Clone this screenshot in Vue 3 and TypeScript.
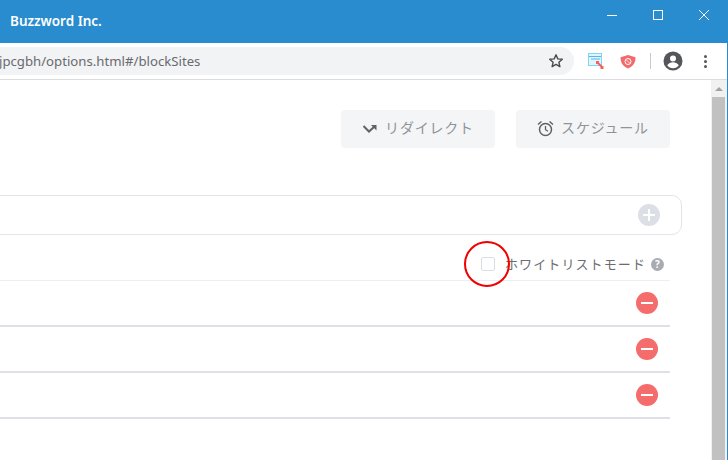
<script setup lang="ts">
const rows = [1, 2, 3]
</script>

<template>
  <div class="window">
    <header class="titlebar">
      <span class="title">Buzzword Inc.</span>
      <div class="window-controls">
        <svg width="12" height="12" viewBox="0 0 12 12"><path d="M1 6.500h10" stroke="#fff" fill="none" /></svg>
        <svg width="12" height="12" viewBox="0 0 12 12"><rect x="1.500" y="1.500" width="9" height="9" stroke="#fff" fill="none" /></svg>
        <svg width="12" height="12" viewBox="0 0 12 12"><path d="M1 1l10 10M11 1L1 11" stroke="#fff" fill="none" /></svg>
      </div>
    </header>

    <div class="toolbar">
      <div class="urlbar">
        <span class="url">jpcgbh/options.html#/blockSites</span>
        <svg class="star" width="16" height="16" viewBox="0 0 16 16">
          <path d="M8 1.800l1.800 4.100 4.500.4-3.400 3 1 4.400L8 11.400l-3.900 2.300 1-4.400-3.400-3 4.500-.4z" fill="none" stroke="#4a4a4c" stroke-width="1.400" stroke-linejoin="round" />
        </svg>
      </div>
      <div class="extensions">
        <svg class="ext-window" width="17" height="18" viewBox="0 0 17 18">
          <rect x="1.500" y="1.500" width="13" height="12" fill="#e3f4fd" stroke="#81d4fa" />
          <path d="M2 4.500h12M4 7h9" stroke="#4fb8ee" />
          <path d="M10 10l5 5" stroke="#f4645a" stroke-width="2" />
          <rect x="9" y="9" width="3" height="3" fill="#f4645a" />
          <rect x="13.500" y="14" width="3" height="3" fill="#f4645a" />
        </svg>
        <svg class="ext-shield" width="16" height="16" viewBox="0 0 16 16">
          <path d="M8 2l7.500 2.200c0 5.300-2 8.900-7.500 11.300C2.500 13.100.5 9.500.5 4.200z" fill="#f26a6a" />
          <circle cx="8" cy="8.500" r="3" fill="none" stroke="#fff" stroke-width="1" />
          <path d="M6.300 6.800l3.400 3.400" stroke="#fff" stroke-width="0.800" />
        </svg>
        <span class="divider"></span>
        <svg class="avatar" width="20" height="20" viewBox="0 0 20 20">
          <circle cx="10" cy="10" r="9.500" fill="#55565a" />
          <circle cx="10" cy="7.500" r="3" fill="#fff" />
          <path d="M4.200 14.200c1.200-2 3.600-3 5.800-3s4.600 1 5.800 3c-1.300 1.800-3.400 3-5.800 3s-4.500-1.200-5.800-3z" fill="#fff" />
        </svg>
        <span class="menu-dots"><i></i><i></i><i></i></span>
      </div>
    </div>

    <div class="viewport">
      <main class="page">
        <div class="tabs">
          <button class="tab">
            <svg width="16" height="16" viewBox="0 0 16 16">
              <path d="M1.500 6l5.500 5.500 6-5.500" fill="none" stroke="#606266" stroke-width="2" />
              <path d="M14.500 5v5.500L9 5z" fill="#606266" />
            </svg>
            <span>リダイレクト</span>
          </button>
          <button class="tab">
            <svg width="17" height="17" viewBox="0 0 17 17">
              <circle cx="8.500" cy="9.500" r="6" fill="none" stroke="#606266" stroke-width="1.500" />
              <path d="M8.500 6v3.700l2.500 1.500" fill="none" stroke="#606266" stroke-width="1.300" />
              <path d="M1 4.500L4.500 1.500M16 4.500l-3.500-3" fill="none" stroke="#606266" stroke-width="1.500" />
            </svg>
            <span>スケジュール</span>
          </button>
        </div>

        <div class="add-input">
          <span class="round-icon plus"></span>
        </div>

        <div class="whitelist-row">
          <span class="checkbox"></span>
          <span class="whitelist-label">ホワイトリストモード</span>
          <span class="help">?</span>
        </div>

        <div v-for="row in rows" :key="row" class="site-row">
          <span class="round-icon minus"></span>
        </div>

        <span class="marker"></span>
      </main>

      <aside class="scrollbar">
        <span class="arrow"></span>
        <span class="thumb"></span>
      </aside>
    </div>
  </div>
</template>

<style scoped>
.window {
  width: 728px;
  height: 460px;
  display: flex;
  flex-direction: column;
  overflow: hidden;
  background: #fff;
  box-sizing: border-box;
  border-right: 1px solid #288cce;
  font-family: "Noto Sans", "Noto Sans CJK JP", sans-serif;
}

.titlebar {
  height: 43px;
  flex: none;
  background: #288cce;
  display: flex;
  justify-content: space-between;
  padding-left: 10px;
}

.title {
  color: #fff;
  font-size: 13.5px;
  font-weight: 600;
  line-height: 42px;
}

.window-controls {
  display: flex;
  gap: 34px;
  padding: 9px 17px 0 0;
  align-items: flex-start;
}

.toolbar {
  height: 37px;
  flex: none;
  box-sizing: border-box;
  display: flex;
  border-bottom: 1px solid #dadce0;
  padding-top: 4px;
}

.urlbar {
  width: 574px;
  height: 28px;
  flex: none;
  background: #f1f3f4;
  border-radius: 0 14px 14px 0;
  display: flex;
  align-items: center;
  justify-content: space-between;
  padding-right: 10px;
  box-sizing: border-box;
}

.url {
  color: #6a6a70;
  font-size: 13.2px;
  margin-left: -1px;
}

.star {
  flex: none;
}

.extensions {
  display: flex;
  align-items: center;
  height: 28px;
  padding-left: 13px;
}

.ext-shield {
  margin-left: 16px;
}

.divider {
  width: 1px;
  height: 16px;
  background: #c8cacc;
  margin: 0 12px 0 14px;
}

.menu-dots {
  display: flex;
  flex-direction: column;
  gap: 2px;
  margin-left: 21px;
}

.menu-dots i {
  width: 3px;
  height: 3px;
  background: #55565a;
  border-radius: 50%;
}

.viewport {
  flex: 1;
  display: flex;
  min-height: 0;
}

.page {
  position: relative;
  flex: 1;
  min-width: 0;
  overflow: hidden;
  padding: 30px 41px 0 0;
  display: flex;
  flex-direction: column;
  align-items: stretch;
}

.tabs {
  display: flex;
  justify-content: flex-end;
  gap: 21px;
}

.tab {
  width: 154px;
  height: 38px;
  border: 0;
  border-radius: 4px;
  background: #f4f5f7;
  color: #909399;
  font-family: inherit;
  font-size: 14px;
  letter-spacing: 0.8px;
  display: flex;
  align-items: center;
  justify-content: center;
  gap: 7px;
  padding: 0 0 2px;
}

.tab span {
  margin-top: -2px;
}

.add-input {
  height: 40px;
  box-sizing: border-box;
  margin: 47px -12px 0 -20px;
  border: 1px solid #e2e4e8;
  border-radius: 10px;
  display: flex;
  align-items: center;
  justify-content: flex-end;
  padding-right: 21px;
  flex: none;
}

.round-icon {
  position: relative;
  display: block;
  width: 22px;
  height: 22px;
  border-radius: 50%;
}

.round-icon::before,
.plus::after {
  content: "";
  position: absolute;
  left: 5px;
  top: 10px;
  width: 12px;
  height: 2px;
  background: #fff;
}

.plus {
  background: #dcdfe6;
}

.plus::after {
  transform: rotate(90deg);
}

.minus {
  background: #f56c6c;
}

.whitelist-row {
  height: 46px;
  box-sizing: border-box;
  flex: none;
  border-bottom: 1px solid #ebeef5;
  display: flex;
  align-items: center;
  justify-content: flex-end;
  padding: 13px 6px 0 0;
}

.checkbox {
  width: 12px;
  height: 12px;
  border: 1px solid #dcdfe6;
  border-radius: 2px;
  margin-right: 10px;
}

.whitelist-label {
  color: #6b6d72;
  font-size: 13px;
  letter-spacing: 1.1px;
  margin-top: -2px;
}

.help {
  width: 13px;
  height: 13px;
  margin-left: 5px;
  border-radius: 50%;
  background: #a8abb2;
  color: #fff;
  font-size: 10px;
  font-weight: 700;
  line-height: 13px;
  text-align: center;
}

.site-row {
  height: 46px;
  box-sizing: border-box;
  flex: none;
  border-bottom: 2px solid #dfe0e6;
  display: flex;
  align-items: center;
  justify-content: flex-end;
  padding: 0 12px 0 0;
}

/* red circle annotation drawn over the page */
.marker {
  position: absolute;
  left: 464px;
  top: 161px;
  width: 42px;
  height: 42px;
  border: 2px solid #f00000;
  border-radius: 50%;
}

.scrollbar {
  width: 16px;
  flex: none;
  background: #f1f1f1;
  display: flex;
  flex-direction: column;
}

.arrow {
  width: 0;
  height: 0;
  flex: none;
  margin: 7px 0 6px 4px;
  border-left: 4px solid transparent;
  border-right: 4px solid transparent;
  border-bottom: 4px solid #a3a3a3;
}

.thumb {
  width: 13px;
  flex: 1;
  margin-left: 1px;
  background: #c1c1c1;
}
</style>

<style>
html,
body {
  margin: 0;
  overflow: hidden;
}
</style>
